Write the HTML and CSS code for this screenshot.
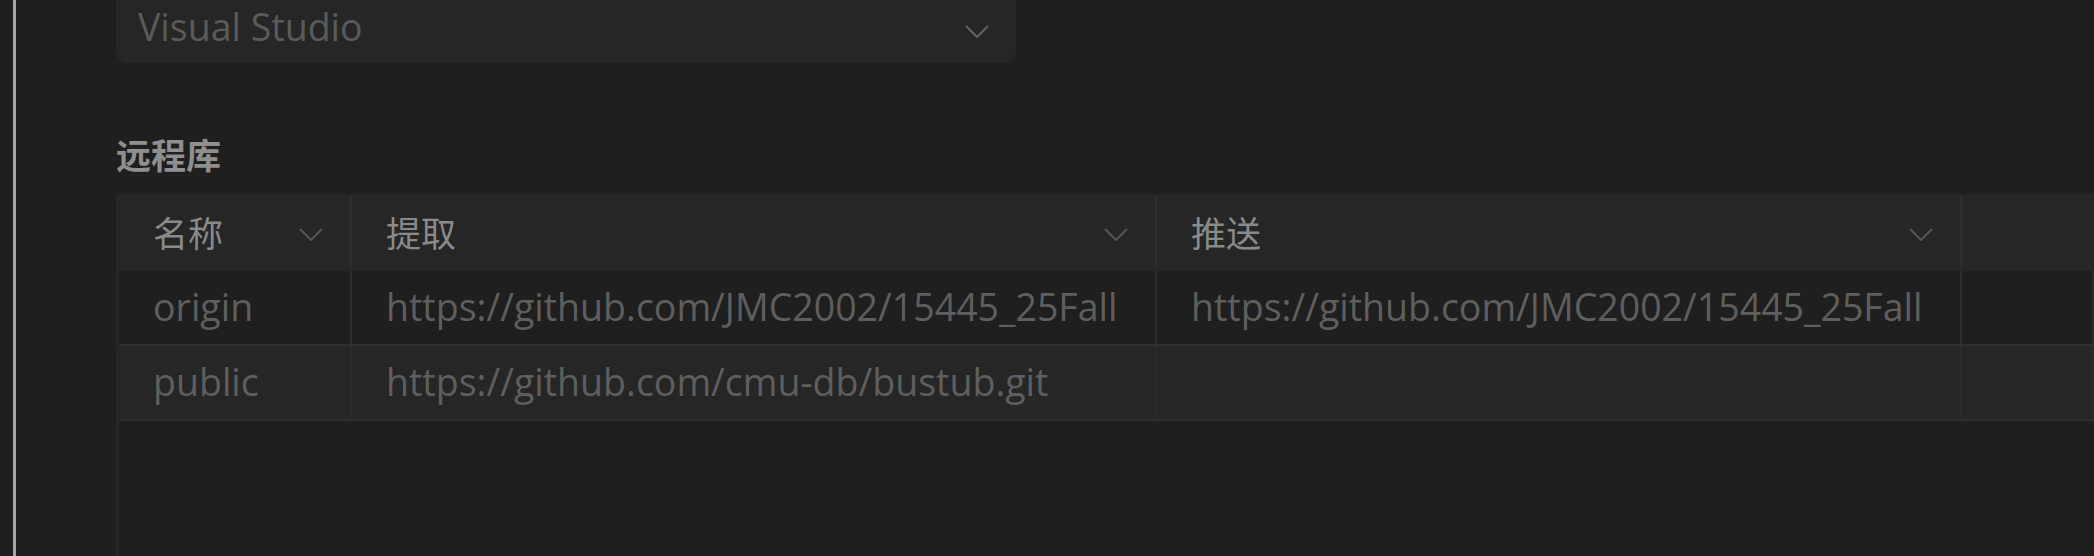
FILE: index.html
```html
<!DOCTYPE html>
<html lang="zh-CN">
<head>
<meta charset="utf-8">
<title>远程库</title>
<link rel="stylesheet" href="styles.css">
</head>
<body>
<div class="app">
  <div class="gutter"></div>
  <div class="divider"></div>
  <main class="main">
    <div class="select">
      <span class="select-value">Visual Studio</span>
      <svg class="chev chev-select" viewBox="0 0 24 13" width="24" height="13"><polyline points="1,1 12,12 23,1"/></svg>
    </div>

    <h2 class="section-title">远程库</h2>

    <div class="table">
      <div class="thead">
        <div class="th"><span>名称</span><svg class="chev" viewBox="0 0 24 13" width="24" height="13"><polyline points="1,1 12,12 23,1"/></svg></div>
        <div class="th"><span>提取</span><svg class="chev" viewBox="0 0 24 13" width="24" height="13"><polyline points="1,1 12,12 23,1"/></svg></div>
        <div class="th"><span>推送</span><svg class="chev" viewBox="0 0 24 13" width="24" height="13"><polyline points="1,1 12,12 23,1"/></svg></div>
        <div class="th th-last"></div>
      </div>
      <div class="row row-odd">
        <div class="td">origin</div>
        <div class="td">https://github.com/JMC2002/15445_25Fall</div>
        <div class="td">https://github.com/JMC2002/15445_25Fall</div>
        <div class="td td-last"></div>
      </div>
      <div class="row row-even">
        <div class="td">public</div>
        <div class="td">https://github.com/cmu-db/bustub.git</div>
        <div class="td"></div>
        <div class="td td-last"></div>
      </div>
    </div>
  </main>
</div>
</body>
</html>
```

FILE: styles.css
```css
html, body {
  margin: 0;
  padding: 0;
  height: 556px;
  overflow: hidden;
  background: #1f1f1f;
}

body {
  font-family: "Open Sans", "Noto Sans CJK SC", sans-serif;
}

.app {
  display: flex;
  height: 556px;
}

.gutter {
  width: 13px;
  flex: none;
  background: #1e1e1e;
}

.divider {
  width: 3px;
  flex: none;
  background: #a8a8a8;
}

.main {
  flex: 1;
  min-width: 0;
  padding-left: 100px;
  overflow: hidden;
}

.select {
  box-sizing: border-box;
  width: 900px;
  height: 79px;
  margin-top: -16px;
  padding: 6px 27px 0 22px;
  background: #262626;
  border-radius: 12px;
  display: flex;
  align-items: center;
  justify-content: space-between;
}

.select-value {
  font-size: 37.5px;
  color: #5a5a5a;
  line-height: 1;
}

.chev {
  flex: none;
  display: block;
}

.chev polyline {
  fill: none;
  stroke: #555555;
  stroke-width: 2;
}

.chev-select {
  margin-top: 10px;
}

.chev-select polyline {
  stroke: #626262;
}

.section-title {
  margin: 73px 0 0 0;
  font-family: "Noto Sans CJK SC", sans-serif;
  font-size: 35px;
  line-height: 35px;
  font-weight: 700;
  color: #8f8f8f;
}

.table {
  margin-top: 23px;
  border-left: 3px solid #262626;
  height: 400px;
}

.thead,
.row {
  display: grid;
  grid-template-columns: 233px 805px 805px 1fr;
}

.thead {
  background: #262626;
  padding: 3px 0;
}

.th {
  box-sizing: border-box;
  height: 71px;
  padding: 0 27px 3px 34px;
  display: flex;
  align-items: center;
  justify-content: space-between;
  border-right: 2px solid #2e2e2e;
  font-family: "Noto Sans CJK SC", sans-serif;
  font-size: 35px;
  color: #8a8a8a;
}

.th .chev {
  margin-top: 6px;
}

.th-last,
.td-last {
  border-right: none;
}

.row {
  height: 75px;
  box-sizing: border-box;
  border-bottom: 2px solid #2f2f2f;
}

.row-odd {
  background: #1f1f1f;
}

.row-even {
  background: #262626;
}

.td {
  box-sizing: border-box;
  padding: 0 0 3px 34px;
  display: flex;
  align-items: center;
  border-right: 2px solid #2b2b2b;
  font-size: 37.5px;
  color: #5e5e5e;
  white-space: nowrap;
  overflow: hidden;
}
```
